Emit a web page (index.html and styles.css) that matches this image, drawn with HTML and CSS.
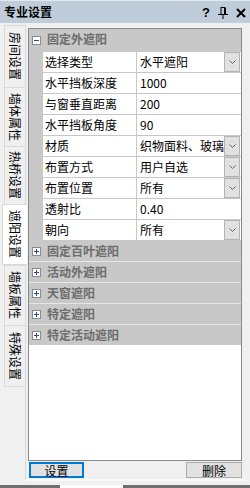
FILE: index.html
```html
<!DOCTYPE html>
<html lang="zh">
<head>
  <meta charset="UTF-8" />
  <title>专业设置</title>
  <link rel="stylesheet" href="styles.css">
</head>
<body>
  <div class="titlebar">
    <span class="title">专业设置</span>
    <span class="tb-icons">
      <span class="q">?</span>
      <svg class="pin" width="10" height="12" viewBox="0 0 10 12">
        <path d="M2.5 0.5h5M3 1v6M6.5 1v6M7.5 1v6M0 7.5h10M5 8v4" fill="none" stroke="#000" stroke-width="1"/>
      </svg>
      <svg class="close" width="10" height="10" viewBox="0 0 10 10">
        <path d="M1 1l8 8M9 1l-8 8" fill="none" stroke="#000" stroke-width="2"/>
      </svg>
    </span>
  </div>

  <div class="main">
    <div class="tabs">
      <div class="tab h62"><span>房间设置</span></div>
      <div class="tab h59"><span>墙体属性</span></div>
      <div class="tab h58"><span>热桥设置</span></div>
      <div class="tab active h61"><span>遮阳设置</span></div>
      <div class="tab h60"><span>墙板属性</span></div>
      <div class="tab h62"><span>特殊设置</span></div>
    </div>

    <div class="page">
      <div class="grid">
        <div class="cat first">
          <span class="gut"><svg width="9" height="9" viewBox="0 0 9 9"><rect x="0.5" y="0.5" width="8" height="8" fill="#fff" stroke="#8c8c8c"/><path d="M2 4.5h5" stroke="#2a4a9a"/></svg></span>
          <span class="cat-name">固定外遮阳</span>
        </div>
        <div class="row"><span class="gut"></span><span class="name">选择类型</span><span class="val"><span class="vt">水平遮阳</span><span class="dd"><svg width="7" height="4" viewBox="0 0 7 4"><path d="M0.5 0.5l3 3 3-3" fill="none" stroke="#666"/></svg></span></span></div>
        <div class="row"><span class="gut"></span><span class="name">水平挡板深度</span><span class="val"><span class="vt">1000</span></span></div>
        <div class="row"><span class="gut"></span><span class="name">与窗垂直距离</span><span class="val"><span class="vt">200</span></span></div>
        <div class="row"><span class="gut"></span><span class="name">水平挡板角度</span><span class="val"><span class="vt">90</span></span></div>
        <div class="row"><span class="gut"></span><span class="name">材质</span><span class="val"><span class="vt">织物面料、玻璃</span><span class="dd"><svg width="7" height="4" viewBox="0 0 7 4"><path d="M0.5 0.5l3 3 3-3" fill="none" stroke="#666"/></svg></span></span></div>
        <div class="row"><span class="gut"></span><span class="name">布置方式</span><span class="val"><span class="vt">用户自选</span><span class="dd"><svg width="7" height="4" viewBox="0 0 7 4"><path d="M0.5 0.5l3 3 3-3" fill="none" stroke="#666"/></svg></span></span></div>
        <div class="row"><span class="gut"></span><span class="name">布置位置</span><span class="val"><span class="vt">所有</span><span class="dd"><svg width="7" height="4" viewBox="0 0 7 4"><path d="M0.5 0.5l3 3 3-3" fill="none" stroke="#666"/></svg></span></span></div>
        <div class="row"><span class="gut"></span><span class="name">透射比</span><span class="val"><span class="vt">0.40</span></span></div>
        <div class="row"><span class="gut"></span><span class="name">朝向</span><span class="val"><span class="vt">所有</span><span class="dd"><svg width="7" height="4" viewBox="0 0 7 4"><path d="M0.5 0.5l3 3 3-3" fill="none" stroke="#666"/></svg></span></span></div>

        <div class="cat">
          <span class="gut"><svg width="9" height="9" viewBox="0 0 9 9"><rect x="0.5" y="0.5" width="8" height="8" fill="#fff" stroke="#8c8c8c"/><path d="M2 4.5h5M4.5 2v5" stroke="#2a4a9a"/></svg></span>
          <span class="cat-name">固定百叶遮阳</span>
        </div>
        <div class="cat">
          <span class="gut"><svg width="9" height="9" viewBox="0 0 9 9"><rect x="0.5" y="0.5" width="8" height="8" fill="#fff" stroke="#8c8c8c"/><path d="M2 4.5h5M4.5 2v5" stroke="#2a4a9a"/></svg></span>
          <span class="cat-name">活动外遮阳</span>
        </div>
        <div class="cat">
          <span class="gut"><svg width="9" height="9" viewBox="0 0 9 9"><rect x="0.5" y="0.5" width="8" height="8" fill="#fff" stroke="#8c8c8c"/><path d="M2 4.5h5M4.5 2v5" stroke="#2a4a9a"/></svg></span>
          <span class="cat-name">天窗遮阳</span>
        </div>
        <div class="cat">
          <span class="gut"><svg width="9" height="9" viewBox="0 0 9 9"><rect x="0.5" y="0.5" width="8" height="8" fill="#fff" stroke="#8c8c8c"/><path d="M2 4.5h5M4.5 2v5" stroke="#2a4a9a"/></svg></span>
          <span class="cat-name">特定遮阳</span>
        </div>
        <div class="cat last">
          <span class="gut"><svg width="9" height="9" viewBox="0 0 9 9"><rect x="0.5" y="0.5" width="8" height="8" fill="#fff" stroke="#8c8c8c"/><path d="M2 4.5h5M4.5 2v5" stroke="#2a4a9a"/></svg></span>
          <span class="cat-name">特定活动遮阳</span>
        </div>
      </div>

      <div class="btns">
        <button class="btn focused">设置</button>
        <button class="btn">删除</button>
      </div>
    </div>
  </div>

  <div class="dock">
    <span class="dock-tab"></span>
    <span class="dock-gap"></span>
    <span class="dock-tab wide"></span>
  </div>
</body>
</html>
```

FILE: styles.css
```css
* {
  box-sizing: border-box;
}

body {
  margin: 0;
  width: 250px;
  height: 488px;
  overflow: hidden;
  background-color: #f0f0f0;
  font-family: "Noto Sans CJK SC", "Microsoft YaHei", sans-serif;
  font-size: 12px;
  color: #000;
}

/* title bar */
.titlebar {
  height: 23px;
  background-color: #bfcddb;
  border-top: 1px solid #e2e8ef;
  display: flex;
  align-items: center;
  justify-content: space-between;
  padding: 0 4px 0 4px;
}

.title {
  font-weight: bold;
  font-size: 12px;
  line-height: 16px;
}

.tb-icons {
  display: flex;
  align-items: center;
  gap: 8px;
  margin-top: 2px;
}

.q {
  font-family: "Liberation Sans", Arial, sans-serif;
  font-weight: bold;
  font-size: 13px;
  line-height: 12px;
}

/* body */
.main {
  display: flex;
  margin-top: 2px;
  height: 456px;
}

.tabs {
  width: 25px;
  display: flex;
  flex-direction: column;
}

.tab {
  margin-left: 4px;
  width: 21px;
  border: 1px solid #d9d9d9;
  border-right: none;
  border-bottom: none;
  display: flex;
  align-items: center;
  justify-content: center;
}

.tab span {
  writing-mode: vertical-rl;
  text-orientation: sideways;
  font-size: 12px;
  line-height: 14px;
}

.tab.active {
  margin-left: 2px;
  width: 25px;
  background-color: #fff;
  border-color: #d9d9d9;
  border-bottom: 1px solid #d9d9d9;
  position: relative;
  z-index: 1;
}

.h58 { height: 58px; }
.h59 { height: 59px; }
.h60 { height: 60px; }
.h61 { height: 61px; }
.h62 { height: 62px; }

.tabs .tab:last-child {
  border-bottom: 1px solid #d9d9d9;
}

.page {
  width: 221px;
  border-left: 1px solid #d9d9d9;
  border-bottom: 2px solid #fafafa;
  padding: 3px 4px 1px 2px;
}

/* property grid */
.grid {
  height: 433px;
  border: 1px solid #8a8a8a;
  background-color: #fff;
}

.gut {
  width: 14px;
  flex-shrink: 0;
  display: flex;
  align-items: center;
  justify-content: center;
  padding-left: 1px;
}

.cat {
  display: flex;
  height: 21px;
  background-color: #c8c8c8;
  border-bottom: 1px solid #e6e6e6;
}

.cat.first {
  height: 23px;
  border-bottom: 1px solid #c8c8c8;
}

.cat.last {
  border-bottom: none;
  height: 20px;
}

.cat-name {
  padding-left: 4px;
  line-height: 20px;
  font-weight: bold;
  color: #6d6d6d;
}

.row {
  display: flex;
  height: 21px;
  border-bottom: 1px solid #c8c8c8;
}

.row .gut {
  background-color: #c8c8c8;
}

.name {
  width: 94px;
  flex-shrink: 0;
  border-right: 1px solid #c8c8c8;
  padding-left: 2px;
  line-height: 20px;
  white-space: nowrap;
}

.val {
  flex: 1;
  display: flex;
  min-width: 0;
}

.vt {
  flex: 1;
  min-width: 0;
  overflow: hidden;
  white-space: nowrap;
  padding-left: 3px;
  line-height: 20px;
}

.dd {
  width: 16px;
  flex-shrink: 0;
  margin-right: 1px;
  background-color: #e1e1e1;
  border: 1px solid #b4b4b4;
  display: flex;
  align-items: center;
  justify-content: center;
}

/* buttons */
.btns {
  display: flex;
  justify-content: space-between;
  margin-top: 1px;
  padding-left: 1px;
}

.btn {
  height: 16px;
  width: 56px;
  padding: 0;
  font-family: "Noto Sans CJK SC", sans-serif;
  font-size: 12px;
  line-height: 13px;
  background-color: #e1e1e1;
  border: 1px solid #adadad;
  color: #000;
}

.btn.focused {
  width: 55px;
  border: 2px solid #0078d7;
}

/* bottom dock */
.dock {
  display: flex;
  padding-top: 4px;
  height: 8px;
}

.dock-tab {
  width: 60px;
  height: 3px;
  background-color: #6f6f6f;
}

.dock-gap {
  width: 63px;
  height: 3px;
  background-color: #fff;
}

.dock-tab.wide {
  flex: 1;
}
```
